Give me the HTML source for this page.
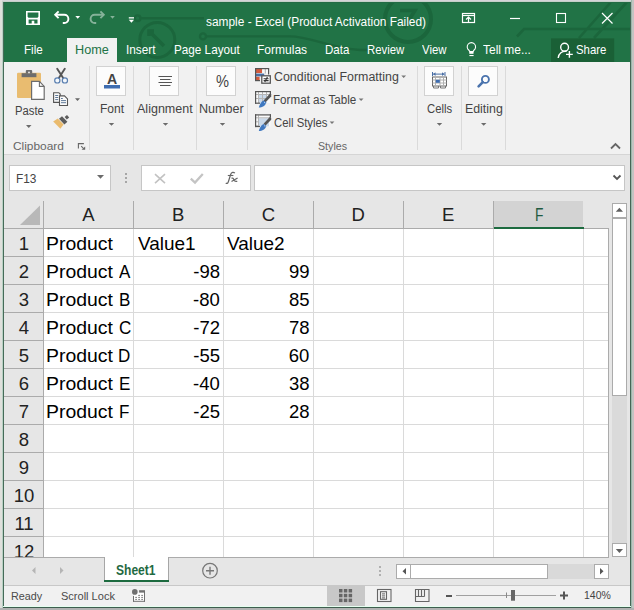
<!DOCTYPE html>
<html><head><meta charset="utf-8">
<style>
*{margin:0;padding:0;box-sizing:border-box}
html,body{width:634px;height:610px;overflow:hidden;background:#dedede;font-family:"Liberation Sans",sans-serif}
.a{position:absolute}
.t{position:absolute;white-space:nowrap;line-height:1}
svg{position:absolute;overflow:visible}
</style></head>
<body>

<div class="a" style="left:3px;top:2px;width:628px;height:60px;background:#217346;"></div>
<div class="a" style="left:4px;top:62px;width:626px;height:92px;background:#f1f1f1;"></div>
<div class="a" style="left:4px;top:154px;width:626px;height:1px;background:#d5d5d5;"></div>
<div class="a" style="left:4px;top:155px;width:626px;height:402px;background:#e6e6e6;"></div>
<div class="a" style="left:4px;top:557px;width:626px;height:28px;background:#e6e6e6;"></div>
<div class="a" style="left:4px;top:585px;width:626px;height:1px;background:#c8c8c8;"></div>
<div class="a" style="left:4px;top:586px;width:626px;height:21px;background:#f1f1f1;"></div>
<svg style="left:0;top:0" width="634" height="62">
<g fill="none" stroke="#1b663c" stroke-width="2.4">
<circle cx="137.6" cy="18.2" r="2.8"/><path d="M140.4 18.2H204"/>
<circle cx="203" cy="36.4" r="3"/><path d="M206 36.4H290C310 36.4 330 48 360 50H388"/>
<circle cx="157.3" cy="39.9" r="17.5" stroke-width="3"/>
<path d="M149 36v-5h5M149.5 31.5L164 46" stroke-width="3.5"/>
<circle cx="408" cy="19" r="23" stroke-width="4"/>
<path d="M400 10.5H415L404 28" stroke-width="3.5"/>
<path d="M517 36.5L524 29H632M579 38L611 2M594 38L627 2" stroke-width="2.6"/>
</g>
<path fill="#fff" fill-rule="evenodd" d="M26 11h14v14H26z M27.6 12.5h10.8v4.3l-0.9 0.9h-9l-0.9-0.9z M28.6 19.4h8.9v4.1h-3.2v-2.7h-2.6v2.7h-3.1z"/>
<path d="M56 14.8H64.3A4.1 4.1 0 0 1 64.3 23H62.8" fill="none" stroke="#fff" stroke-width="1.9"/>
<path d="M58.6 11.4L55.2 14.8L58.6 18.2" fill="none" stroke="#fff" stroke-width="1.9"/>
<path d="M75.3 16h4.8l-2.4 2.8z" fill="#fff"/>
<g opacity="0.45">
<path d="M103 14.8H94.7A4.1 4.1 0 0 0 94.7 23H96.2" fill="none" stroke="#fff" stroke-width="1.9"/>
<path d="M100.4 11.4L103.8 14.8L100.4 18.2" fill="none" stroke="#fff" stroke-width="1.9"/>
<path d="M110.2 16h4.6l-2.3 2.7z" fill="#fff"/>
</g>
<rect x="128.8" y="17.2" width="5.2" height="1.3" fill="#fff"/>
<path d="M128.8 19.8h5.2l-2.6 3z" fill="#fff"/>
<!-- ribbon display options -->
<rect x="462.5" y="13.5" width="12" height="9" fill="none" stroke="#fff" stroke-width="1.2"/>
<path d="M462.5 15.5h12" stroke="#fff" stroke-width="1.2"/>
<path d="M468.5 22.5v-5M466 19.5l2.5-2.5 2.5 2.5" fill="none" stroke="#fff" stroke-width="1.2"/>
<!-- minimize -->
<path d="M510 18.5h10" stroke="#fff" stroke-width="1.2"/>
<!-- maximize -->
<rect x="556.5" y="13.5" width="9" height="9" fill="none" stroke="#fff" stroke-width="1.1"/>
<!-- close -->
<path d="M602 13l10.5 10.5M612.5 13L602 23.5" stroke="#fff" stroke-width="1.2"/>
<!-- share bg -->
<rect x="551" y="38.4" width="63.2" height="23.6" fill="#1a6036"/>
<!-- lightbulb -->
<path d="M469.7 51.6L468.9 50.2A4.2 4.2 0 1 1 473.9 50.2L473.1 51.6z" fill="none" stroke="#fff" stroke-width="1.1"/>
<rect x="469.3" y="51.6" width="4.2" height="2.2" fill="#fff"/>
<rect x="469.4" y="55" width="4.2" height="1.1" fill="#fff"/>
<!-- person -->
<circle cx="564.6" cy="47.2" r="3.9" fill="none" stroke="#fff" stroke-width="1.4"/>
<path d="M558.2 58a7 7 0 0 1 8.4-6.6" fill="none" stroke="#fff" stroke-width="1.4"/>
<path d="M566 54.4h6.8M569.4 51v6.8" stroke="#fff" stroke-width="1.4"/>
</svg>
<div class="a" style="left:67px;top:38px;width:50px;height:24px;background:#f1f1f1;"></div>
<div class="t" style="left:206.00px;top:15.89px;font-size:12px;color:#fff;font-weight:normal;font-family:'Liberation Sans';;transform:scaleX(0.9907);transform-origin:0 0">sample - Excel (Product Activation Failed)</div>
<div class="t" style="left:23.74px;top:43.91px;font-size:12.8px;color:#fff;font-weight:normal;font-family:'Liberation Sans';;transform:scaleX(0.9102);transform-origin:0 0">File</div>
<div class="t" style="left:74.76px;top:43.91px;font-size:12.8px;color:#217346;font-weight:normal;font-family:'Liberation Sans';;transform:scaleX(0.9900);transform-origin:0 0">Home</div>
<div class="t" style="left:125.94px;top:43.91px;font-size:12.8px;color:#fff;font-weight:normal;font-family:'Liberation Sans';;transform:scaleX(0.9186);transform-origin:0 0">Insert</div>
<div class="t" style="left:174.24px;top:43.91px;font-size:12.8px;color:#fff;font-weight:normal;font-family:'Liberation Sans';;transform:scaleX(0.9156);transform-origin:0 0">Page Layout</div>
<div class="t" style="left:257.01px;top:43.91px;font-size:12.8px;color:#fff;font-weight:normal;font-family:'Liberation Sans';;transform:scaleX(0.9394);transform-origin:0 0">Formulas</div>
<div class="t" style="left:324.66px;top:43.91px;font-size:12.8px;color:#fff;font-weight:normal;font-family:'Liberation Sans';;transform:scaleX(0.8994);transform-origin:0 0">Data</div>
<div class="t" style="left:366.67px;top:43.91px;font-size:12.8px;color:#fff;font-weight:normal;font-family:'Liberation Sans';;transform:scaleX(0.8883);transform-origin:0 0">Review</div>
<div class="t" style="left:422.36px;top:43.91px;font-size:12.8px;color:#fff;font-weight:normal;font-family:'Liberation Sans';;transform:scaleX(0.8903);transform-origin:0 0">View</div>
<div class="t" style="left:483.37px;top:43.91px;font-size:12.8px;color:#fff;font-weight:normal;font-family:'Liberation Sans';;transform:scaleX(0.9356);transform-origin:0 0">Tell me...</div>
<div class="t" style="left:576.11px;top:43.91px;font-size:12.8px;color:#fff;font-weight:normal;font-family:'Liberation Sans';;transform:scaleX(0.8899);transform-origin:0 0">Share</div>
<svg style="left:0;top:0" width="634" height="160">
<!-- separators -->
<g fill="#dadada">
<rect x="89" y="66" width="1" height="84"/>
<rect x="133" y="66" width="1" height="84"/>
<rect x="196" y="66" width="1" height="84"/>
<rect x="247" y="66" width="1" height="84"/>
<rect x="417" y="66" width="1" height="84"/>
<rect x="461" y="66" width="1" height="84"/>
<rect x="505" y="66" width="1" height="84"/>
</g>
<!-- paste -->
<rect x="17" y="72.7" width="24" height="25.3" rx="1.2" fill="#e9bc70"/>
<path d="M21.6 73.2h14.8v4H21.6z" fill="#6d6d6d"/>
<path d="M25.8 73.5v-2.4a1 1 0 0 1 1-1h4.4a1 1 0 0 1 1 1v2.4z" fill="#6d6d6d"/>
<circle cx="29" cy="72.4" r="0.9" fill="#f1f1f1"/>
<path d="M31.6 81.4h7.8l4.8 5v13h-12.6z" fill="#fff" stroke="#6d6d6d" stroke-width="1.2"/>
<path d="M39.4 81.4v5h4.8" fill="none" stroke="#6d6d6d" stroke-width="1.1"/>
<path d="M26 125h5.5l-2.75 3z" fill="#6b6b6b"/>
<!-- scissors -->
<path d="M57.2 68.8L63.8 79M64.8 68.8L58.2 79" stroke="#555" stroke-width="1.9" stroke-linecap="round"/>
<circle cx="57.3" cy="80.4" r="2.6" fill="#f4f8fc" stroke="#5a7fb0" stroke-width="1.2"/>
<circle cx="64.9" cy="80.4" r="2.6" fill="#f4f8fc" stroke="#5a7fb0" stroke-width="1.2"/>
<!-- copy -->
<path d="M53.6 92.7h5.2l1.4 1.4v8.3h-6.6z" fill="#fafafa" stroke="#555" stroke-width="1.1"/>
<path d="M55.2 95.5h3M55.2 97.5h3M55.2 99.6h3" stroke="#4d6a8c" stroke-width="0.9"/>
<path d="M59.5 95.9h5l3 3v6.6h-8z" fill="#fafafa" stroke="#555" stroke-width="1.1"/>
<path d="M61 98.5h1.8M61 100.6h5M61 102.7h5" stroke="#4d6a8c" stroke-width="0.9"/>
<path d="M75 98.3h5l-2.5 2.6z" fill="#666"/>
<!-- format painter -->
<path d="M53.2 121.4L57.8 118.4L63.6 124.6L60.4 128.8z" fill="#eabb6e"/>
<path d="M59 118.8L62 116.2L67.4 121.8L64.4 124.4z" fill="#5b5b5b"/>
<path d="M64.6 117L67 115L69.2 117.4L66.8 119.6z" fill="#5b5b5b"/>
<!-- dialog launcher -->
<path d="M78.4 148.6V143.6H83.9" fill="none" stroke="#666" stroke-width="1.1"/>
<path d="M81.2 146.2L83.6 148.6" stroke="#666" stroke-width="1.1"/>
<path d="M85.2 146.4V149.8H81.6z" fill="#666"/>
<!-- big buttons -->
<rect x="96.5" y="66.5" width="29" height="29" fill="#fcfcfc" stroke="#d2d2d2"/>
<rect x="149.5" y="66.5" width="29" height="29" fill="#fcfcfc" stroke="#d2d2d2"/>
<rect x="206.5" y="66.5" width="29" height="29" fill="#fcfcfc" stroke="#d2d2d2"/>
<rect x="424.5" y="66.5" width="29" height="29" fill="#fcfcfc" stroke="#d2d2d2"/>
<rect x="468.5" y="66.5" width="29" height="29" fill="#fcfcfc" stroke="#d2d2d2"/>
<rect x="104" y="85" width="16" height="3.5" fill="#3e6db0"/>
<path d="M158.5 76.5h13.5M160 79.5h10.5M158.5 82.5h13.5M160 85.5h10.5" stroke="#555" stroke-width="1"/>
<!-- cells icon -->
<rect x="432" y="72" width="1" height="4" fill="#4a6fa5"/>
<rect x="444.5" y="72" width="1" height="4" fill="#4a6fa5"/>
<rect x="433" y="73.6" width="11.5" height="1" fill="#4a6fa5"/>
<path d="M433.2 74.1l2.3-1.8v3.6zM444.3 74.1l-2.3-1.8v3.6z" fill="#4a6fa5"/>
<rect x="432.5" y="77" width="14" height="9" fill="#fff" stroke="#666" stroke-width="1"/>
<path d="M435.5 77v9M440 77v9M443.5 77v9M432.5 80h14M432.5 83h14" stroke="#b0b0b0" stroke-width="1"/>
<rect x="435.8" y="79.8" width="4" height="3" fill="#3e6db0"/>
<path d="M433.5 86v2h5v-2M440.5 86v2h5v-2" fill="none" stroke="#777" stroke-width="1"/>
<!-- magnifier -->
<circle cx="485.4" cy="79.4" r="3.5" fill="none" stroke="#4a73ad" stroke-width="1.9"/>
<path d="M482.8 82.2l-4.2 4.2" stroke="#4a73ad" stroke-width="2.6" stroke-linecap="round"/>
<!-- dropdown arrows -->
<path d="M108.8 123h5.4l-2.7 2.7zM162.8 123h5.4l-2.7 2.7zM219.8 123h5.4l-2.7 2.7zM436.8 123h5.4l-2.7 2.7zM481 123h5.4l-2.7 2.7z" fill="#6b6b6b"/>
<path d="M401.3 75.5h4.8l-2.4 2.4zM358.7 98.5h4.8l-2.4 2.4zM329.6 121.5h4.8l-2.4 2.4z" fill="#777"/>
<!-- conditional formatting icon -->
<rect x="256" y="69" width="6.2" height="4" fill="#d35a3c"/>
<rect x="262.2" y="69" width="6.3" height="4.5" fill="#fafafa"/>
<rect x="264.8" y="69" width="1" height="4.5" fill="#b0b0b0"/>
<rect x="256" y="73.6" width="8.2" height="2.8" fill="#4a6fa5"/>
<rect x="256" y="76.8" width="3.6" height="3.4" fill="#d35a3c"/>
<rect x="255" y="68" width="14" height="1.2" fill="#555"/>
<rect x="255" y="68" width="1.2" height="13" fill="#555"/>
<rect x="268" y="68" width="1.2" height="6.5" fill="#555"/>
<rect x="255" y="80" width="5" height="1.2" fill="#555"/>
<rect x="261.8" y="75.8" width="8.5" height="7.4" fill="#fff" stroke="#555" stroke-width="1.3"/>
<path d="M263.6 78.7h5M263.6 80.6h5M267.4 77l-2.6 5" stroke="#333" stroke-width="1.1"/>
<!-- format as table -->
<g transform="translate(0,0.0)"><rect x="256" y="92" width="14.5" height="11" fill="#fafafa"/><rect x="259" y="95" width="7.5" height="8" fill="#c9d9ea"/><path d="M258.5 92v11M262.5 92v11M266.5 92v5M256 94.5h14M256 98.5h10.5" stroke="#b5b5b5" stroke-width="1"/><rect x="255" y="91" width="16" height="1.2" fill="#555"/><rect x="255" y="91" width="1.2" height="12.8" fill="#555"/><rect x="255" y="102.6" width="5" height="1.2" fill="#555"/><rect x="269.8" y="91" width="1.2" height="3" fill="#555"/><path d="M270.2 93.2L271.2 94.6V96.4L265.6 102.2L263.6 100.4z" fill="#555"/><path d="M258.8 107.6C259.6 104.6 261.2 101.6 263.6 100.6L266.4 102.6C265.6 105.6 262.2 107.6 258.8 107.6z" fill="#3f78c0"/><path d="M264 102.2l1.4 1" stroke="#b9d3f0" stroke-width="0.9"/></g>
<!-- cell styles -->
<g transform="translate(0,23.3)"><rect x="256" y="92" width="14.5" height="11" fill="#fafafa"/><rect x="259" y="95" width="10" height="8" fill="#c9d9ea"/><path d="M258.5 92v11M256 94.5h14M256 98.5h3M256 102.5h3" stroke="#b5b5b5" stroke-width="1"/><rect x="255" y="91" width="16" height="1.2" fill="#555"/><rect x="255" y="91" width="1.2" height="12.8" fill="#555"/><rect x="255" y="102.6" width="5" height="1.2" fill="#555"/><rect x="269.8" y="91" width="1.2" height="3" fill="#555"/><path d="M270.2 93.2L271.2 94.6V96.4L265.6 102.2L263.6 100.4z" fill="#555"/><path d="M258.8 107.6C259.6 104.6 261.2 101.6 263.6 100.6L266.4 102.6C265.6 105.6 262.2 107.6 258.8 107.6z" fill="#3f78c0"/><path d="M264 102.2l1.4 1" stroke="#b9d3f0" stroke-width="0.9"/></g>
<!-- collapse chevron -->
<path d="M611 148.5l4.5-4.5 4.5 4.5" fill="none" stroke="#666" stroke-width="1.8"/>
</svg>
<div class="t" style="left:107.38px;top:71.79px;font-size:14.6px;color:#444;font-weight:bold;font-family:'Liberation Sans';;transform:scaleX(0.9664);transform-origin:0 0">A</div>
<div class="t" style="left:216.24px;top:73.51px;font-size:16px;color:#444;font-weight:normal;font-family:'Liberation Sans';;transform:scaleX(0.9132);transform-origin:0 0">%</div>
<div class="t" style="left:14.70px;top:104.97px;font-size:12.5px;color:#444;font-weight:normal;font-family:'Liberation Sans';;transform:scaleX(0.9010);transform-origin:0 0">Paste</div>
<div class="t" style="left:99.84px;top:103.17px;font-size:12.5px;color:#444;font-weight:normal;font-family:'Liberation Sans';;transform:scaleX(0.9649);transform-origin:0 0">Font</div>
<div class="t" style="left:137.20px;top:103.17px;font-size:12.5px;color:#444;font-weight:normal;font-family:'Liberation Sans';;transform:scaleX(1.0016);transform-origin:0 0">Alignment</div>
<div class="t" style="left:199.39px;top:103.17px;font-size:12.5px;color:#444;font-weight:normal;font-family:'Liberation Sans';;transform:scaleX(1.0070);transform-origin:0 0">Number</div>
<div class="t" style="left:427.16px;top:103.17px;font-size:12.5px;color:#444;font-weight:normal;font-family:'Liberation Sans';;transform:scaleX(0.9015);transform-origin:0 0">Cells</div>
<div class="t" style="left:464.51px;top:103.17px;font-size:12.5px;color:#444;font-weight:normal;font-family:'Liberation Sans';;transform:scaleX(0.9885);transform-origin:0 0">Editing</div>
<div class="t" style="left:273.70px;top:70.87px;font-size:12.5px;color:#444;font-weight:normal;font-family:'Liberation Sans';;transform:scaleX(0.9923);transform-origin:0 0">Conditional Formatting</div>
<div class="t" style="left:273.37px;top:93.57px;font-size:12.5px;color:#444;font-weight:normal;font-family:'Liberation Sans';;transform:scaleX(0.9311);transform-origin:0 0">Format as Table</div>
<div class="t" style="left:273.76px;top:116.67px;font-size:12.5px;color:#444;font-weight:normal;font-family:'Liberation Sans';;transform:scaleX(0.9052);transform-origin:0 0">Cell Styles</div>
<div class="t" style="left:13.03px;top:140.82px;font-size:11.5px;color:#666;font-weight:normal;font-family:'Liberation Sans';;transform:scaleX(1.0338);transform-origin:0 0">Clipboard</div>
<div class="t" style="left:317.74px;top:140.82px;font-size:11.5px;color:#666;font-weight:normal;font-family:'Liberation Sans';;transform:scaleX(0.9271);transform-origin:0 0">Styles</div>
<svg style="left:0;top:0" width="634" height="200">
<rect x="9.5" y="165.5" width="101" height="25" fill="#fff" stroke="#c6c6c6"/>
<path d="M97 175h7l-3.5 3.7z" fill="#6b6b6b"/>
<rect x="125" y="173" width="2" height="2" fill="#a6a6a6"/>
<rect x="125" y="177" width="2" height="2" fill="#a6a6a6"/>
<rect x="125" y="181" width="2" height="2" fill="#a6a6a6"/>
<rect x="141.5" y="165.5" width="109" height="25" fill="#fff" stroke="#c6c6c6"/>
<path d="M155 174.2l10 9M165 174.2l-10 9" stroke="#c2c2c2" stroke-width="1.6"/>
<path d="M190.8 178.6l4.2 4 7.8-8.6" fill="none" stroke="#c4c4c4" stroke-width="2.3"/>
<rect x="254.5" y="165.5" width="370" height="25" fill="#fff" stroke="#c6c6c6"/>
<path d="M613.5 175.5l3.5 3.5 3.5-3.5" fill="none" stroke="#555" stroke-width="1.8"/>
<path d="M234.8 173.2C233.6 171.8 231.4 172 230.6 174.6L228.4 181.6C227.8 183.6 226.6 183.8 225.9 182.8" fill="none" stroke="#666" stroke-width="1.3"/>
<path d="M227.8 175.5H233.4" stroke="#666" stroke-width="1.1"/>
<path d="M231.4 178.3C232.8 177.6 233.4 178.4 233.9 179.8C234.4 181.2 235.4 181.8 237.3 181.2M237.6 177.9L231.5 181.6" fill="none" stroke="#666" stroke-width="1.2"/>
</svg>
<div class="t" style="left:16.05px;top:173.27px;font-size:12.5px;color:#444;font-weight:normal;font-family:'Liberation Sans';;transform:scaleX(0.9482);transform-origin:0 0">F13</div>
<div class="a" style="left:4px;top:201px;width:604px;height:27px;background:#e6e6e6;"></div>
<div class="a" style="left:493px;top:201px;width:90px;height:27px;background:#d3d3d3;"></div>
<div class="a" style="left:44px;top:229px;width:564px;height:328px;background:#fff;"></div>
<div class="a" style="left:4px;top:229px;width:39px;height:328px;background:#e6e6e6;"></div>
<svg style="left:0;top:0" width="634" height="610">
<path d="M20 225h20V205.5z" fill="#b8b8b8"/>
<rect x="133" y="229" width="1" height="328" fill="#dadada"/>
<rect x="223" y="229" width="1" height="328" fill="#dadada"/>
<rect x="313" y="229" width="1" height="328" fill="#dadada"/>
<rect x="403" y="229" width="1" height="328" fill="#dadada"/>
<rect x="493" y="229" width="1" height="328" fill="#dadada"/>
<rect x="583" y="229" width="1" height="328" fill="#dadada"/>
<rect x="44" y="256" width="564" height="1" fill="#dadada"/>
<rect x="44" y="284" width="564" height="1" fill="#dadada"/>
<rect x="44" y="312" width="564" height="1" fill="#dadada"/>
<rect x="44" y="340" width="564" height="1" fill="#dadada"/>
<rect x="44" y="368" width="564" height="1" fill="#dadada"/>
<rect x="44" y="396" width="564" height="1" fill="#dadada"/>
<rect x="44" y="424" width="564" height="1" fill="#dadada"/>
<rect x="44" y="452" width="564" height="1" fill="#dadada"/>
<rect x="44" y="480" width="564" height="1" fill="#dadada"/>
<rect x="44" y="508" width="564" height="1" fill="#dadada"/>
<rect x="44" y="536" width="564" height="1" fill="#dadada"/>
<rect x="133" y="201" width="1" height="27" fill="#ababab"/>
<rect x="223" y="201" width="1" height="27" fill="#ababab"/>
<rect x="313" y="201" width="1" height="27" fill="#ababab"/>
<rect x="403" y="201" width="1" height="27" fill="#ababab"/>
<rect x="493" y="201" width="1" height="27" fill="#ababab"/>
<rect x="43" y="201" width="1" height="356" fill="#ababab"/>
<rect x="4" y="228" width="604" height="1" fill="#ababab"/>
<rect x="4" y="256" width="39" height="1" fill="#ababab"/>
<rect x="4" y="284" width="39" height="1" fill="#ababab"/>
<rect x="4" y="312" width="39" height="1" fill="#ababab"/>
<rect x="4" y="340" width="39" height="1" fill="#ababab"/>
<rect x="4" y="368" width="39" height="1" fill="#ababab"/>
<rect x="4" y="396" width="39" height="1" fill="#ababab"/>
<rect x="4" y="424" width="39" height="1" fill="#ababab"/>
<rect x="4" y="452" width="39" height="1" fill="#ababab"/>
<rect x="4" y="480" width="39" height="1" fill="#ababab"/>
<rect x="4" y="508" width="39" height="1" fill="#ababab"/>
<rect x="4" y="536" width="39" height="1" fill="#ababab"/>
<rect x="608" y="228" width="1" height="329" fill="#ababab"/>
<rect x="4" y="557" width="605" height="1" fill="#ababab"/>
<rect x="612" y="203" width="15" height="354" fill="#dadada"/>
<rect x="612.5" y="203.5" width="14" height="14" fill="#fff" stroke="#ababab"/>
<rect x="612.5" y="217.5" width="14" height="178" fill="#fff" stroke="#ababab"/>
<rect x="612" y="217" width="15" height="2" fill="#ababab"/>
<rect x="612.5" y="543.5" width="14" height="13" fill="#fff" stroke="#ababab"/>
<path d="M615.8 211.8h7.2l-3.6-4z" fill="#606060"/>
<path d="M615.8 549h7.2l-3.6 4z" fill="#606060"/>
</svg>
<div class="a" style="left:494px;top:227px;width:90px;height:2px;background:#1d6b40;"></div>
<div class="t" style="left:82.29px;top:205.89px;font-size:18.5px;color:#222;font-weight:normal;font-family:'Liberation Sans';">A</div>
<div class="t" style="left:172.00px;top:205.89px;font-size:18.5px;color:#222;font-weight:normal;font-family:'Liberation Sans';">B</div>
<div class="t" style="left:261.71px;top:205.89px;font-size:18.5px;color:#222;font-weight:normal;font-family:'Liberation Sans';">C</div>
<div class="t" style="left:351.42px;top:205.89px;font-size:18.5px;color:#222;font-weight:normal;font-family:'Liberation Sans';">D</div>
<div class="t" style="left:442.00px;top:205.89px;font-size:18.5px;color:#222;font-weight:normal;font-family:'Liberation Sans';">E</div>
<div class="t" style="left:534.62px;top:205.89px;font-size:18.5px;color:#1f5a40;font-weight:normal;font-family:'Liberation Sans';;transform:scaleX(0.7459);transform-origin:0 0">F</div>
<div class="t" style="left:-76px;width:200px;text-align:center;top:235.19px;font-size:18.5px;color:#222;font-weight:normal;font-family:'Liberation Sans';">1</div>
<div class="t" style="left:-76px;width:200px;text-align:center;top:263.19px;font-size:18.5px;color:#222;font-weight:normal;font-family:'Liberation Sans';">2</div>
<div class="t" style="left:-76px;width:200px;text-align:center;top:291.19px;font-size:18.5px;color:#222;font-weight:normal;font-family:'Liberation Sans';">3</div>
<div class="t" style="left:-76px;width:200px;text-align:center;top:319.19px;font-size:18.5px;color:#222;font-weight:normal;font-family:'Liberation Sans';">4</div>
<div class="t" style="left:-76px;width:200px;text-align:center;top:347.19px;font-size:18.5px;color:#222;font-weight:normal;font-family:'Liberation Sans';">5</div>
<div class="t" style="left:-76px;width:200px;text-align:center;top:375.19px;font-size:18.5px;color:#222;font-weight:normal;font-family:'Liberation Sans';">6</div>
<div class="t" style="left:-76px;width:200px;text-align:center;top:403.19px;font-size:18.5px;color:#222;font-weight:normal;font-family:'Liberation Sans';">7</div>
<div class="t" style="left:-76px;width:200px;text-align:center;top:431.19px;font-size:18.5px;color:#222;font-weight:normal;font-family:'Liberation Sans';">8</div>
<div class="t" style="left:-76px;width:200px;text-align:center;top:459.19px;font-size:18.5px;color:#222;font-weight:normal;font-family:'Liberation Sans';">9</div>
<div class="t" style="left:-76px;width:200px;text-align:center;top:487.19px;font-size:18.5px;color:#222;font-weight:normal;font-family:'Liberation Sans';">10</div>
<div class="t" style="left:-76px;width:200px;text-align:center;top:515.19px;font-size:18.5px;color:#222;font-weight:normal;font-family:'Liberation Sans';">11</div>
<div class="t" style="left:-76px;width:200px;text-align:center;top:543.19px;font-size:18.5px;color:#222;font-weight:normal;font-family:'Liberation Sans';">12</div>
<div class="t" style="left:46.38px;top:234.99px;font-size:18.5px;color:#000;font-weight:normal;font-family:'Liberation Sans';;transform:scaleX(1.0485);transform-origin:0 0">Product</div>
<div class="t" style="left:137.50px;top:234.99px;font-size:18.5px;color:#000;font-weight:normal;font-family:'Liberation Sans';;transform:scaleX(1.0256);transform-origin:0 0">Value1</div>
<div class="t" style="left:227.40px;top:234.99px;font-size:18.5px;color:#000;font-weight:normal;font-family:'Liberation Sans';;transform:scaleX(1.0256);transform-origin:0 0">Value2</div>
<div class="t" style="left:46.38px;top:262.99px;font-size:18.5px;color:#000;font-weight:normal;font-family:'Liberation Sans';;transform:scaleX(1.0485);transform-origin:0 0">Product</div>
<div class="t" style="left:118.90px;top:262.99px;font-size:18.5px;color:#000;font-weight:normal;font-family:'Liberation Sans';transform:scaleX(0.92);transform-origin:0 0">A</div>
<div class="t" style="left:193.31px;top:262.99px;font-size:18.5px;color:#000;font-weight:normal;font-family:'Liberation Sans';">-98</div>
<div class="t" style="left:288.97px;top:262.99px;font-size:18.5px;color:#000;font-weight:normal;font-family:'Liberation Sans';">99</div>
<div class="t" style="left:46.38px;top:290.99px;font-size:18.5px;color:#000;font-weight:normal;font-family:'Liberation Sans';;transform:scaleX(1.0485);transform-origin:0 0">Product</div>
<div class="t" style="left:118.97px;top:290.99px;font-size:18.5px;color:#000;font-weight:normal;font-family:'Liberation Sans';transform:scaleX(0.92);transform-origin:0 0">B</div>
<div class="t" style="left:193.02px;top:290.99px;font-size:18.5px;color:#000;font-weight:normal;font-family:'Liberation Sans';">-80</div>
<div class="t" style="left:288.97px;top:290.99px;font-size:18.5px;color:#000;font-weight:normal;font-family:'Liberation Sans';">85</div>
<div class="t" style="left:46.38px;top:318.99px;font-size:18.5px;color:#000;font-weight:normal;font-family:'Liberation Sans';;transform:scaleX(1.0485);transform-origin:0 0">Product</div>
<div class="t" style="left:119.00px;top:318.99px;font-size:18.5px;color:#000;font-weight:normal;font-family:'Liberation Sans';transform:scaleX(0.92);transform-origin:0 0">C</div>
<div class="t" style="left:193.31px;top:318.99px;font-size:18.5px;color:#000;font-weight:normal;font-family:'Liberation Sans';">-72</div>
<div class="t" style="left:288.97px;top:318.99px;font-size:18.5px;color:#000;font-weight:normal;font-family:'Liberation Sans';">78</div>
<div class="t" style="left:46.38px;top:346.99px;font-size:18.5px;color:#000;font-weight:normal;font-family:'Liberation Sans';;transform:scaleX(1.0485);transform-origin:0 0">Product</div>
<div class="t" style="left:118.47px;top:346.99px;font-size:18.5px;color:#000;font-weight:normal;font-family:'Liberation Sans';transform:scaleX(0.92);transform-origin:0 0">D</div>
<div class="t" style="left:193.31px;top:346.99px;font-size:18.5px;color:#000;font-weight:normal;font-family:'Liberation Sans';">-55</div>
<div class="t" style="left:288.68px;top:346.99px;font-size:18.5px;color:#000;font-weight:normal;font-family:'Liberation Sans';">60</div>
<div class="t" style="left:46.38px;top:374.99px;font-size:18.5px;color:#000;font-weight:normal;font-family:'Liberation Sans';;transform:scaleX(1.0485);transform-origin:0 0">Product</div>
<div class="t" style="left:118.97px;top:374.99px;font-size:18.5px;color:#000;font-weight:normal;font-family:'Liberation Sans';transform:scaleX(0.92);transform-origin:0 0">E</div>
<div class="t" style="left:193.02px;top:374.99px;font-size:18.5px;color:#000;font-weight:normal;font-family:'Liberation Sans';">-40</div>
<div class="t" style="left:288.97px;top:374.99px;font-size:18.5px;color:#000;font-weight:normal;font-family:'Liberation Sans';">38</div>
<div class="t" style="left:46.38px;top:402.99px;font-size:18.5px;color:#000;font-weight:normal;font-family:'Liberation Sans';;transform:scaleX(1.0485);transform-origin:0 0">Product</div>
<div class="t" style="left:118.97px;top:402.99px;font-size:18.5px;color:#000;font-weight:normal;font-family:'Liberation Sans';transform:scaleX(0.92);transform-origin:0 0">F</div>
<div class="t" style="left:193.31px;top:402.99px;font-size:18.5px;color:#000;font-weight:normal;font-family:'Liberation Sans';">-25</div>
<div class="t" style="left:288.97px;top:402.99px;font-size:18.5px;color:#000;font-weight:normal;font-family:'Liberation Sans';">28</div>
<div class="a" style="left:4px;top:557px;width:626px;height:28px;background:#e6e6e6;"></div>
<div class="a" style="left:4px;top:557px;width:605px;height:1px;background:#ababab;"></div>
<svg style="left:0;top:0" width="634" height="610">
<path d="M35.5 567v7l-3.5-3.5z" fill="#b5b5b5"/>
<path d="M60 567v7l3.5-3.5z" fill="#b5b5b5"/>
<rect x="104" y="557" width="65" height="25" fill="#fff"/>
<rect x="104" y="557" width="1" height="23" fill="#a6a6a6"/>
<rect x="168" y="557" width="1" height="23" fill="#a6a6a6"/>
<rect x="104" y="580" width="65" height="2" fill="#1d6b40"/>
<circle cx="210" cy="570.7" r="7.3" fill="none" stroke="#777" stroke-width="1.2"/>
<path d="M206 570.7h8M210 566.7v8" stroke="#777" stroke-width="1.4"/>
<rect x="379" y="566" width="2" height="2" fill="#b0b0b0"/>
<rect x="379" y="570" width="2" height="2" fill="#b0b0b0"/>
<rect x="379" y="574" width="2" height="2" fill="#b0b0b0"/>
<rect x="396" y="564" width="213" height="15" fill="#d9d9d9"/>
<rect x="396.5" y="564.5" width="14" height="14" fill="#fff" stroke="#ababab"/>
<rect x="410.5" y="564.5" width="137" height="14" fill="#fff" stroke="#ababab"/>
<rect x="594.5" y="564.5" width="14" height="14" fill="#fff" stroke="#ababab"/>
<path d="M406 568v6.5l-3.5-3.25z" fill="#555"/>
<path d="M600 568v6.5l3.5-3.25z" fill="#555"/>
<!-- status bar -->
<rect x="134" y="592.6" width="10" height="8.2" fill="#fff"/>
<circle cx="134.8" cy="591.9" r="2.8" fill="#707070"/>
<rect x="139.1" y="590.2" width="5.9" height="2.4" fill="#707070"/>
<rect x="144" y="592" width="1" height="9.8" fill="#707070"/>
<rect x="133" y="600.8" width="12" height="1" fill="#707070"/>
<rect x="133" y="596" width="1" height="5.8" fill="#707070"/>
<g fill="#707070"><rect x="138.2" y="594.9" width="1.8" height="0.9"/><rect x="141.2" y="594.9" width="1.8" height="0.9"/>
<rect x="135.2" y="596.9" width="1.8" height="0.9"/><rect x="138.2" y="596.9" width="1.8" height="0.9"/><rect x="141.2" y="596.9" width="1.8" height="0.9"/>
<rect x="135.2" y="598.9" width="1.8" height="0.9"/><rect x="138.2" y="598.9" width="1.8" height="0.9"/><rect x="141.2" y="598.9" width="1.8" height="0.9"/></g>
<rect x="327" y="586" width="38" height="21" fill="#c8c8c8"/>
<g fill="#666">
<rect x="339" y="589" width="3.5" height="3.5"/><rect x="343.8" y="589" width="3.5" height="3.5"/><rect x="348.6" y="589" width="3.5" height="3.5"/>
<rect x="339" y="593.8" width="3.5" height="3.5"/><rect x="343.8" y="593.8" width="3.5" height="3.5"/><rect x="348.6" y="593.8" width="3.5" height="3.5"/>
<rect x="339" y="598.6" width="3.5" height="3.5"/><rect x="343.8" y="598.6" width="3.5" height="3.5"/><rect x="348.6" y="598.6" width="3.5" height="3.5"/>
</g>
<rect x="377.5" y="589.5" width="13.5" height="12" fill="none" stroke="#666" stroke-width="1.1"/>
<rect x="380.5" y="591.7" width="6" height="7.6" fill="none" stroke="#666" stroke-width="1.1"/>
<path d="M382 593.9h3M382 595.9h3M382 597.9h3" stroke="#666" stroke-width="1"/>
<path d="M415.5 589.5h13.5v12h-13.5zM418.5 589.5v7M421.5 589.5v7M424.5 589.5v7M415.5 596.5h9" fill="none" stroke="#666" stroke-width="1.1"/>
<rect x="446" y="595" width="6" height="2" fill="#555"/>
<rect x="456" y="595" width="100" height="1" fill="#a0a0a0"/>
<rect x="506" y="592.5" width="1" height="5.5" fill="#888"/>
<rect x="511" y="590" width="4" height="10.7" fill="#666"/>
<path d="M560 595.5h8M564 591.5v8" stroke="#555" stroke-width="2"/>
</svg>
<div class="t" style="left:116.31px;top:562.80px;font-size:14px;color:#1f6a42;font-weight:bold;font-family:'Liberation Sans';;transform:scaleX(0.8601);transform-origin:0 0">Sheet1</div>
<div class="t" style="left:10.72px;top:591.24px;font-size:11px;color:#4a4a4a;font-weight:normal;font-family:'Liberation Sans';;transform:scaleX(0.9807);transform-origin:0 0">Ready</div>
<div class="t" style="left:60.75px;top:591.24px;font-size:11px;color:#4a4a4a;font-weight:normal;font-family:'Liberation Sans';;transform:scaleX(1.0019);transform-origin:0 0">Scroll Lock</div>
<div class="t" style="left:584.23px;top:590.02px;font-size:11.5px;color:#444;font-weight:normal;font-family:'Liberation Sans';;transform:scaleX(0.9118);transform-origin:0 0">140%</div>
<div class="a" style="left:0;top:0;width:634px;height:2px;background:#d4d4d8"></div>
<div class="a" style="left:0;top:1px;width:634px;height:1px;background:#c4d0c8"></div>
<div class="a" style="left:3px;top:2px;width:628px;height:1px;background:#236b45"></div>
<div class="a" style="left:0;top:0;width:2px;height:610px;background:#dfe0dc"></div>
<div class="a" style="left:2px;top:2px;width:1px;height:606px;background:#b8d0c4"></div>
<div class="a" style="left:3px;top:2px;width:1px;height:606px;background:#466b58"></div>
<div class="a" style="left:630px;top:2px;width:1px;height:606px;background:#466656"></div>
<div class="a" style="left:631px;top:0;width:1px;height:610px;background:#9ab8aa"></div>
<div class="a" style="left:632px;top:0;width:2px;height:610px;background:#c4c4c2"></div>
<div class="a" style="left:3px;top:606px;width:628px;height:1px;background:#e6fff0"></div>
<div class="a" style="left:3px;top:607px;width:628px;height:1px;background:#3e5e4e"></div>
<div class="a" style="left:0;top:608px;width:634px;height:2px;background:#b2b2b2"></div>
</body></html>
